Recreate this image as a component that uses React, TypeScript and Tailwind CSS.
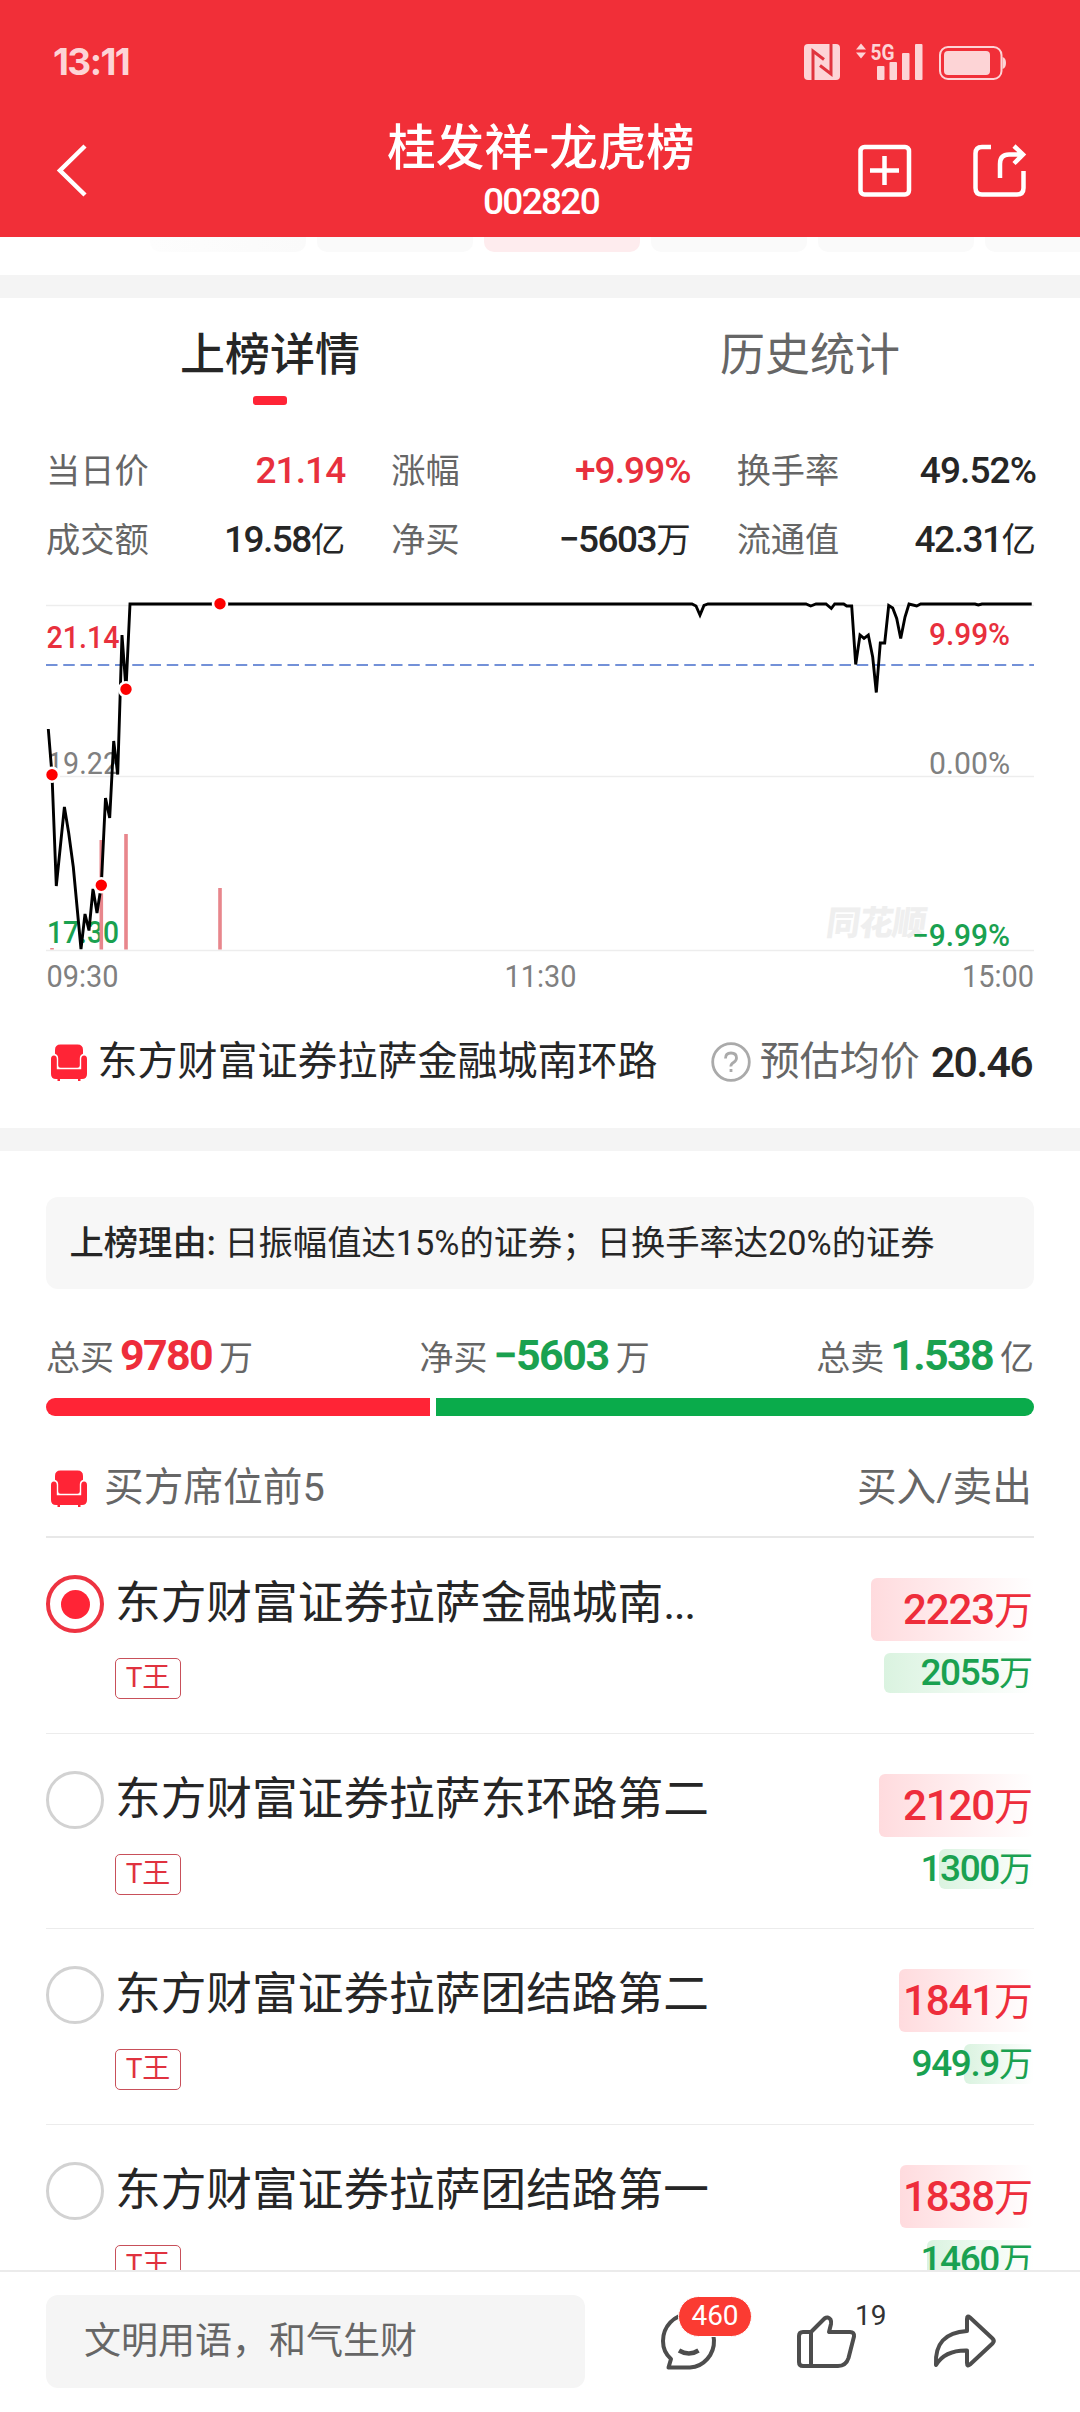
const RED = "#e8303d";
const GREEN = "#1aa150";

const stats = [
  { label: "当日价", value: "21.14", unit: "", color: "text-[#e8303d]" },
  { label: "涨幅", value: "+9.99%", unit: "", color: "text-[#e8303d]" },
  { label: "换手率", value: "49.52%", unit: "", color: "text-[#262626]" },
  { label: "成交额", value: "19.58", unit: "亿", color: "text-[#262626]" },
  { label: "净买", value: "−5603", unit: "万", color: "text-[#262626]" },
  { label: "流通值", value: "42.31", unit: "亿", color: "text-[#262626]" },
];

const seats = [
  { name: "东方财富证券拉萨金融城南...", buy: "2223", sell: "2055", buyWidth: 163, sellWidth: 150, checked: true },
  { name: "东方财富证券拉萨东环路第二", buy: "2120", sell: "1300", buyWidth: 155, sellWidth: 95, checked: false },
  { name: "东方财富证券拉萨团结路第二", buy: "1841", sell: "949.9", buyWidth: 135, sellWidth: 70, checked: false },
  { name: "东方财富证券拉萨团结路第一", buy: "1838", sell: "1460", buyWidth: 134, sellWidth: 107, checked: false },
];

const pricePoints = [
  [48.3, 149], [52, 194.7], [56.3, 306], [64.4, 227], [68.7, 253], [73.3, 287], [81, 369], [85, 334], [89, 350.5],
  [93, 309], [97, 333], [101.3, 305.3], [105.5, 218], [109.7, 238], [113.7, 161], [117.7, 194.5], [122, 55],
  [126, 109.3], [130, 24], [692, 24], [696, 26], [700, 35], [704, 25.5], [708, 24], [806, 24], [810.7, 26], [816, 24],
  [826, 24], [831.3, 28.5], [834.7, 24], [843.7, 24], [846.7, 26], [851.7, 26], [855.7, 84.5], [860, 55], [864, 58.3],
  [868.3, 55], [872.7, 77], [876.3, 112.5], [880.3, 63], [884.7, 63], [888.7, 25.5], [892.7, 28], [896.7, 38.5],
  [900.7, 58.5], [905, 37], [909, 24], [916.7, 26], [920.7, 24], [975, 24], [978.3, 25], [982, 24], [1031.7, 24],
];

const trades = [
  [52, 194.7],
  [101.3, 305.3],
  [126, 109.3],
  [220, 23.7],
];

const volumes = [
  [52, 368],
  [101.3, 260],
  [126, 254],
  [220, 308],
];

function SofaIcon() {
  return (
    <svg className="h-[37px] w-9 shrink-0" viewBox="0 0 36 37" fill="#ff2436">
      <path d="M4 6Q4 .5 9.500 .5H26.500Q32 .5 32 6V9.800Q28.800 11 28.800 14.500V21.500Q28.800 23.800 26.500 23.800H9.500Q7.200 23.800 7.200 21.500V14.500Q7.200 11 4 9.800Z" />
      <path d="M0 15Q0 11.500 2.900 11.500Q5.800 11.500 5.800 15V25.300H30.200V15Q30.200 11.500 33.100 11.500Q36 11.500 36 15V30Q36 35 31 35H5Q0 35 0 30Z" />
      <path d="M6.500 34h2.500v3H6.500zM27 34h2.500v3H27z" />
    </svg>
  );
}

function StatusBar() {
  return (
    <div className="flex h-[124px] items-start justify-between pl-[53px] pt-[42px] pr-[73px] text-[#fdd4d6]">
      <span className="font-['Inter'] text-[37px] leading-10 font-bold tracking-[-1.600px]">13:11</span>
      <svg className="-mt-[12px] h-[52px] w-[204px]" viewBox="803 30 204 52" fill="#fdd4d6">
        <rect x="804" y="44" width="36" height="36" rx="4" />
        <path d="M813 80V51L824 59.500M831 44V74L820 65.500" fill="none" stroke="#e0343d" strokeWidth="3" />
        <path d="M861 43.500l5 6h-10zM861 58.500l5-6h-10z" />
        <text x="870.500" y="59.500" fontSize="22" fontWeight="700" textLength="24" lengthAdjust="spacingAndGlyphs">5G</text>
        <rect x="877" y="66" width="7.500" height="14" rx="1" />
        <rect x="889.500" y="62" width="7.500" height="18" rx="1" />
        <rect x="902" y="53" width="7.500" height="27" rx="1" />
        <rect x="915" y="44" width="7.500" height="36" rx="1" />
        <rect x="940" y="47" width="61.500" height="32" rx="8" fill="none" stroke="#fdd4d6" strokeWidth="2" />
        <rect x="944" y="51" width="46" height="24" rx="4" />
        <path d="M1002.500 57q3.500 1 3.500 6t-3.500 6z" />
      </svg>
    </div>
  );
}

function Header() {
  return (
    <header className="h-[237px] shrink-0 bg-[#f12f38] text-white">
      <StatusBar />
      <div className="flex items-start justify-between pr-[52px] pl-[54px]">
        <svg className="mt-[18px] h-[58px] w-[174px]" viewBox="54 142 174 58" fill="none" stroke="#fff" strokeWidth="4.500">
          <path d="M85 146L60 170.500L85 195" />
        </svg>
        <div className="flex flex-col items-center">
          <h1 className="text-[48.500px] leading-[50px] font-medium">桂发祥-龙虎榜</h1>
          <p className="mt-[8px] text-[37px] leading-10 font-medium tracking-[-1.700px]">002820</p>
        </div>
        <svg className="mt-[18px] h-[58px] w-[174px]" viewBox="854 142 174 58" fill="none" stroke="#fff" strokeWidth="4.500">
          <rect x="860.500" y="147" width="48.500" height="47.500" rx="4" />
          <path d="M870 170.500H899M884.500 156V185" />
          <path d="M991 147H982Q975.500 147 975.500 153.500V188Q975.500 194.500 982 194.500H1017Q1023.500 194.500 1023.500 188V171" />
          <path d="M1000 178V164Q1000 154.500 1009 154.500H1023M1014 146L1023 154.500L1014 163.500" />
        </svg>
      </div>
    </header>
  );
}

function DateChips() {
  return (
    <div className="flex h-[38px] gap-[11px] overflow-hidden pl-[150px]">
      <div className="h-[15px] w-[156px] shrink-0 rounded-b-[10px] bg-linear-to-r from-[#fdfdfd] to-[#fafafa]" />
      <div className="h-[15px] w-[156px] shrink-0 rounded-b-[10px] bg-[#fafafa]" />
      <div className="h-[15px] w-[156px] shrink-0 rounded-b-[10px] bg-[#feecee]" />
      <div className="h-[15px] w-[156px] shrink-0 rounded-b-[10px] bg-[#fafafa]" />
      <div className="h-[15px] w-[156px] shrink-0 rounded-b-[10px] bg-[#fafafa]" />
      <div className="h-[15px] w-[156px] shrink-0 rounded-b-[10px] bg-[#fafafa]" />
    </div>
  );
}

function Tabs() {
  return (
    <div className="grid h-[107px] grid-cols-2 pt-7 text-center text-[45px] leading-[60px]">
      <div className="flex flex-col items-center">
        <span className="font-medium text-[#262626]">上榜详情</span>
        <span className="mt-[10px] h-[9px] w-[34px] rounded-[3px] bg-[#ff2436]" />
      </div>
      <span className="text-[#666]">历史统计</span>
    </div>
  );
}

function Stats() {
  return (
    <div className="mt-[31px] mb-[6px] grid grid-cols-3 gap-x-[46px] pr-[44px] pl-[46px] leading-[69px]">
      {stats.map((s) => (
        <div key={s.label} className="flex h-[69px] items-baseline justify-between">
          <span className="text-[34.200px] text-[#666]">{s.label}</span>
          <span className={s.color}>
            {s.unit ? (
              <>
                <span className="text-[37px] font-medium tracking-[-1.500px]">{s.value}</span>
                <span className="text-[34.500px]">{s.unit}</span>
              </>
            ) : (
              <span className="text-[37px] font-medium tracking-[-0.900px]">{s.value}</span>
            )}
          </span>
        </div>
      ))}
    </div>
  );
}

function PriceChart() {
  return (
    <svg className="block h-[415px] w-[1080px]" viewBox="0 0 1080 415" fontSize="30.500">
      <path d="M46 25.500H1034M46 196.500H1034M46 370.500H1034" stroke="#ededed" strokeWidth="1.500" />
      <text x="0" y="0" transform="translate(825 355) skewX(-8)" fontSize="34" fontWeight="900" fill="#efefef" textLength="100">
        同花顺
      </text>
      <path d="M46 85H1034" stroke="#7391d8" strokeWidth="2" strokeDasharray="11.500 5.750" />
      <g fontWeight="500">
        <text x="46.500" y="68" fill={RED} textLength="73" lengthAdjust="spacingAndGlyphs">21.14</text>
        <text x="47" y="362.500" fill={GREEN} textLength="72" lengthAdjust="spacingAndGlyphs">17.30</text>
        <text x="929" y="64.500" fill={RED} textLength="81" lengthAdjust="spacingAndGlyphs">9.99%</text>
        <text x="912" y="366" fill={GREEN} textLength="98" lengthAdjust="spacingAndGlyphs">−9.99%</text>
      </g>
      <g fill="#808080">
        <text x="47" y="193.500" textLength="72" lengthAdjust="spacingAndGlyphs">19.22</text>
        <text x="929" y="193.500" textLength="81" lengthAdjust="spacingAndGlyphs">0.00%</text>
        <text x="46.500" y="406.500" textLength="72" lengthAdjust="spacingAndGlyphs">09:30</text>
        <text x="504.500" y="406.500" textLength="72" lengthAdjust="spacingAndGlyphs">11:30</text>
        <text x="962" y="406.500" textLength="72" lengthAdjust="spacingAndGlyphs">15:00</text>
      </g>
      {volumes.map(([x, y]) => (
        <rect key={x} x={x - 1.8} y={y} width="3.600" height={369.5 - y} fill="#e8868c" />
      ))}
      <polyline points={pricePoints.map((p) => p.join(",")).join(" ")} fill="none" stroke="#000" strokeWidth="2.900" />
      {trades.map(([x, y]) => (
        <circle key={x} cx={x} cy={y} r="7" fill="#fe0000" stroke="#fff" strokeWidth="2.600" />
      ))}
    </svg>
  );
}

function ActiveSeat() {
  return (
    <div className="mt-[27px] mb-[26px] flex h-20 items-center pr-[48px] pl-[51px] text-[40px] leading-[80px]">
      <SofaIcon />
      <span className="ml-[10.500px] text-[#262626]">东方财富证券拉萨金融城南环路</span>
      <svg className="ml-auto h-10 w-10" viewBox="0 0 40 40" fill="none" stroke="#aaa" strokeWidth="2.800">
        <circle cx="20" cy="20" r="18.300" />
        <path d="M14.500 16.500Q14.500 11 20 11T25.500 16Q25.500 18.500 22.500 20.500T20 24.500M20 27V30" />
      </svg>
      <span className="ml-[9px] text-[#666]">预估均价</span>
      <span className="ml-[11px] text-[43px] font-medium tracking-[-1.700px] text-[#262626]">20.46</span>
    </div>
  );
}

function Totals() {
  return (
    <div className="mx-[46px]">
      <div className="mt-[36px] flex h-[60px] items-baseline justify-between text-[34px] leading-[60px] text-[#666]">
        <div className="flex items-baseline">
          总买
          <span className="ml-[6px] text-[43px] font-bold tracking-[-1.700px] text-[#ee2d3b]">9780</span>
          <span className="ml-[7px]">万</span>
        </div>
        <div className="flex items-baseline">
          净买
          <span className="ml-[6px] text-[43px] font-bold tracking-[-1.500px] text-[#1aa150]">−5603</span>
          <span className="ml-[7px]">万</span>
        </div>
        <div className="flex items-baseline">
          总卖
          <span className="ml-[6px] text-[43px] font-bold tracking-[-1.700px] text-[#1aa150]">1.538</span>
          <span className="ml-[7px]">亿</span>
        </div>
      </div>
      <div className="mt-[13px] flex h-[18px] gap-[6px]">
        <div className="w-[384px] rounded-l-full bg-[#ff2436]" />
        <div className="flex-1 rounded-r-full bg-[#0aab4b]" />
      </div>
    </div>
  );
}

function SeatRow({ seat }: { seat: (typeof seats)[number] }) {
  return (
    <div className="flex h-[195.700px] shrink-0 justify-between border-b border-[#ececec]">
      <div className="flex pt-[37px]">
        {seat.checked ? (
          <div className="flex size-[58px] items-center justify-center rounded-full border-4 border-[#ee3341]">
            <div className="size-[29px] rounded-full bg-[#ff2436]" />
          </div>
        ) : (
          <div className="size-[58px] rounded-full border-[3px] border-[#d2d2d2]" />
        )}
        <div className="ml-[11px]">
          <div className="h-[58px] text-[45.700px] leading-[58px] whitespace-nowrap text-[#262626]">
            {seat.name.replace("...", "")}
            {seat.name.endsWith("...") && <span className="tracking-[-1.500px]">...</span>}
          </div>
          <div className="mt-[25px] flex h-[41px] w-[66px] justify-center rounded-[5px] border border-[#c8505a] text-[28px] leading-[38px] text-[#e0323f]">
            T王
          </div>
        </div>
      </div>
      <div className="flex flex-col items-end gap-3 pt-10">
        <div className="relative flex h-[63px] items-baseline pr-px leading-[63px] text-[#ee2d3b]">
          <div
            className="absolute top-0 right-0 h-full rounded-[6px] bg-linear-to-r from-[#ffdbde] to-white"
            style={{ width: seat.buyWidth }}
          />
          <span className="relative text-[42px] font-medium tracking-[-1.100px]">{seat.buy}</span>
          <span className="relative text-[39px]">万</span>
        </div>
        <div className="relative flex h-10 items-baseline pr-px leading-10 text-[#1aa150]">
          <div
            className="absolute top-0 right-0 h-full rounded-[6px] bg-linear-to-r from-[#daf3e0] to-white"
            style={{ width: seat.sellWidth }}
          />
          <span className="relative text-[37px] font-medium tracking-[-1.400px]">{seat.sell}</span>
          <span className="relative text-[34px]">万</span>
        </div>
      </div>
    </div>
  );
}

function Footer() {
  return (
    <footer className="flex h-[142px] shrink-0 items-start border-t-2 border-[#ebebeb] bg-white pl-[46px]">
      <div className="mt-[23px] h-[93px] w-[539px] rounded-[12px] bg-[#f5f5f5] pl-[38px] text-[37px] leading-[93px] text-[#666]">
        文明用语，和气生财
      </div>
      <div className="relative mt-[38px] ml-[73px] h-[64px] w-[136px]">
        <svg className="h-[64px] w-[64px]" viewBox="658 2310 64 64" fill="none" stroke="#4d4d4d" strokeWidth="4" strokeLinejoin="round">
          <path d="M668.500 2367.500H690A25.500 26.500 0 1 0 663 2341Q663 2352 671 2359Z" />
          <path d="M679 2350.500Q689 2356.500 698.500 2350.500" strokeWidth="4.500" />
        </svg>
        <span className="absolute top-[-14px] left-[20px] h-[41px] w-[74px] rounded-full border border-white bg-[#fb3b32] text-center text-[28px] leading-[38px] text-white">
          460
        </span>
      </div>
      <div className="relative mt-[38px] h-[64px] w-[136px]">
        <svg className="h-[64px] w-[66px]" viewBox="794 2310 66 64" fill="none" stroke="#4d4d4d" strokeWidth="4" strokeLinejoin="round">
          <path d="M811 2332L824.500 2318.500Q828 2316 830.500 2319.500Q831.500 2321.500 831 2324L829 2332H850Q854.500 2332 854 2336.500L848.500 2358Q846 2366 838 2366H803Q799 2366 799 2362V2336Q799 2332 803 2332ZM811 2332V2366" />
        </svg>
        <span className="absolute top-[-13px] left-[61px] text-[28px] leading-[38px] text-[#333]">19</span>
      </div>
      <svg className="mt-[38px] h-[64px] w-[68px]" viewBox="930 2310 68 64" fill="none" stroke="#4d4d4d" strokeWidth="4" strokeLinejoin="round">
        <path d="M936 2365Q934 2333 967 2331V2319Q967 2315 970 2317.500L992.500 2338.500Q995 2341 992.500 2343.500L970 2364.500Q967 2367 967 2363V2350.500Q945 2350 936 2365Z" />
      </svg>
    </footer>
  );
}

export default function App() {
  return (
    <div className="flex h-[2412px] w-[1080px] flex-col overflow-hidden bg-white font-['Roboto','Noto_Sans_CJK_SC',sans-serif]">
      <Header />
      <main className="flex-1 overflow-hidden">
        <DateChips />
        <div className="h-[23px] bg-[#f4f4f4]" />
        <Tabs />
        <Stats />
        <PriceChart />
        <ActiveSeat />
        <div className="h-[23px] bg-[#f4f4f4]" />
        <div className="mx-[46px] mt-[46px] h-[92px] rounded-[12px] bg-[#f7f7f7] pl-[23.500px] text-[34.300px] leading-[92px] whitespace-nowrap text-[#262626]">
          <span className="font-medium">上榜理由:</span> 日振幅值达15%的证券；日换手率达20%的证券
        </div>
        <Totals />
        <div className="mx-[46px] mt-5 flex h-[102px] items-center border-b-2 border-[#e8e8e8] pt-1 pr-[2px] pl-[5px] text-[39.700px] leading-[60px] text-[#666]">
          <SofaIcon />
          <span className="ml-[17px]">买方席位前5</span>
          <span className="ml-auto">买入/卖出</span>
        </div>
        <div className="mx-[46px]">
          {seats.map((seat) => (
            <SeatRow key={seat.name} seat={seat} />
          ))}
        </div>
      </main>
      <Footer />
    </div>
  );
}
